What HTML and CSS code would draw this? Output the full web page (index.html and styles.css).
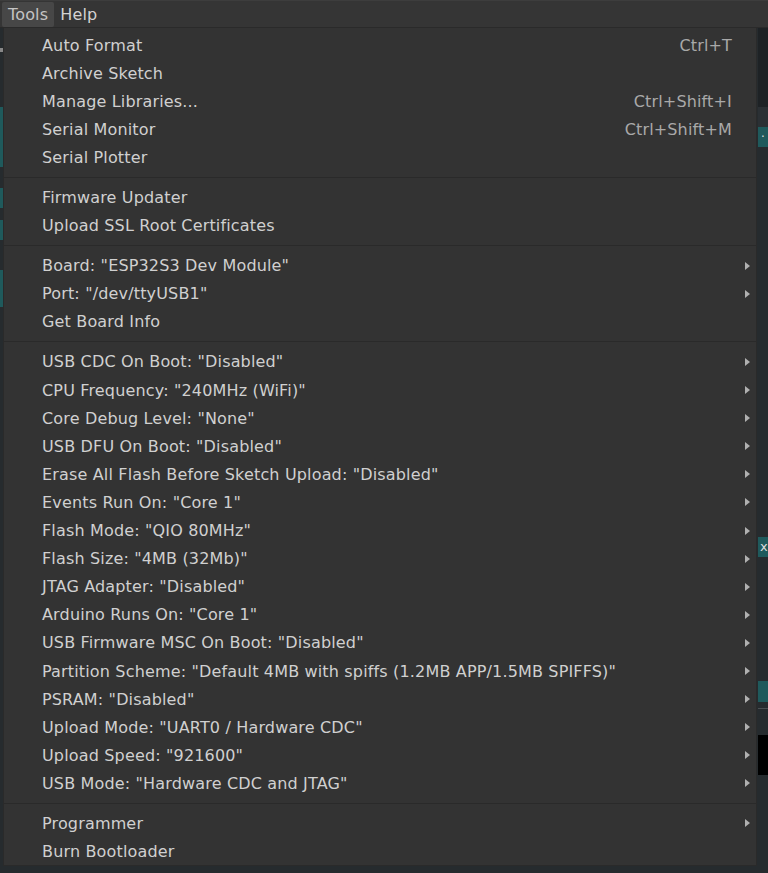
FILE: index.html
```html
<!DOCTYPE html>
<html>
<head>
<meta charset="utf-8">
<link rel="stylesheet" href="styles.css">
</head>
<body>
<div class="window">
  <div class="menubar">
    <span class="mb-item active">Tools</span>
    <span class="mb-item">Help</span>
  </div>
  <div class="editor">
    <div class="deco d1"></div>
    <div class="deco d2"></div>
    <div class="deco d3"></div>
    <div class="deco d4"></div>
    <div class="deco d5"></div>
    <div class="deco r1"></div>
    <div class="deco r2"></div>
    <div class="deco r3">·</div>
    <div class="deco r4">x</div>
    <div class="deco r5"></div>
    <div class="deco r6"></div>
    <div class="deco r7"></div>
  </div>
  <div class="menu">
    <div class="item"><span class="label">Auto Format</span><span class="sc">Ctrl+T</span><span class="arr"></span></div>
    <div class="item"><span class="label">Archive Sketch</span><span class="arr"></span></div>
    <div class="item"><span class="label">Manage Libraries...</span><span class="sc">Ctrl+Shift+I</span><span class="arr"></span></div>
    <div class="item"><span class="label">Serial Monitor</span><span class="sc">Ctrl+Shift+M</span><span class="arr"></span></div>
    <div class="item"><span class="label">Serial Plotter</span><span class="arr"></span></div>
    <div class="sep"></div>
    <div class="item"><span class="label">Firmware Updater</span><span class="arr"></span></div>
    <div class="item"><span class="label">Upload SSL Root Certificates</span><span class="arr"></span></div>
    <div class="sep"></div>
    <div class="item"><span class="label">Board: "ESP32S3 Dev Module"</span><span class="arr sub"></span></div>
    <div class="item"><span class="label">Port: "/dev/ttyUSB1"</span><span class="arr sub"></span></div>
    <div class="item"><span class="label">Get Board Info</span><span class="arr"></span></div>
    <div class="sep"></div>
    <div class="item"><span class="label">USB CDC On Boot: "Disabled"</span><span class="arr sub"></span></div>
    <div class="item"><span class="label">CPU Frequency: "240MHz (WiFi)"</span><span class="arr sub"></span></div>
    <div class="item"><span class="label">Core Debug Level: "None"</span><span class="arr sub"></span></div>
    <div class="item"><span class="label">USB DFU On Boot: "Disabled"</span><span class="arr sub"></span></div>
    <div class="item"><span class="label">Erase All Flash Before Sketch Upload: "Disabled"</span><span class="arr sub"></span></div>
    <div class="item"><span class="label">Events Run On: "Core 1"</span><span class="arr sub"></span></div>
    <div class="item"><span class="label">Flash Mode: "QIO 80MHz"</span><span class="arr sub"></span></div>
    <div class="item"><span class="label">Flash Size: "4MB (32Mb)"</span><span class="arr sub"></span></div>
    <div class="item"><span class="label">JTAG Adapter: "Disabled"</span><span class="arr sub"></span></div>
    <div class="item"><span class="label">Arduino Runs On: "Core 1"</span><span class="arr sub"></span></div>
    <div class="item"><span class="label">USB Firmware MSC On Boot: "Disabled"</span><span class="arr sub"></span></div>
    <div class="item"><span class="label">Partition Scheme: "Default 4MB with spiffs (1.2MB APP/1.5MB SPIFFS)"</span><span class="arr sub"></span></div>
    <div class="item"><span class="label">PSRAM: "Disabled"</span><span class="arr sub"></span></div>
    <div class="item"><span class="label">Upload Mode: "UART0 / Hardware CDC"</span><span class="arr sub"></span></div>
    <div class="item"><span class="label">Upload Speed: "921600"</span><span class="arr sub"></span></div>
    <div class="item"><span class="label">USB Mode: "Hardware CDC and JTAG"</span><span class="arr sub"></span></div>
    <div class="sep"></div>
    <div class="item"><span class="label">Programmer</span><span class="arr sub"></span></div>
    <div class="item"><span class="label">Burn Bootloader</span><span class="arr"></span></div>
  </div>
</div>
</body>
</html>
```
FILE: styles.css
```css
html, body {
  margin: 0;
  padding: 0;
}
body {
  width: 768px;
  height: 873px;
  overflow: hidden;
  background: #262b2e;
  font-family: "DejaVu Sans", "Liberation Sans", sans-serif;
  font-size: 16px;
  letter-spacing: 0.16px;
  color: #cfcfcf;
}
.window {
  position: relative;
  width: 768px;
  height: 873px;
  display: flex;
  flex-direction: column;
}
.menubar {
  height: 28px;
  box-sizing: border-box;
  background: #353535;
  border-top: 1px solid #3d3d3d;
  border-bottom: 1px solid #2a2a2a;
  display: flex;
  align-items: center;
  padding-left: 2px;
}
.mb-item {
  height: 25px;
  line-height: 25px;
  padding: 0 6px;
  color: #d2d2d2;
  border-radius: 2px;
}
.mb-item.active {
  background: #474747;
  color: #c4c4c4;
}
.editor {
  flex: 1;
  position: relative;
  background: #262b2e;
}
.deco {
  position: absolute;
}
.d1 { left: 0; top: 79px; width: 3px; height: 60px; background: #1f5a5c; }
.d2 { left: 0; top: 160px; width: 3px; height: 20px; background: #1f5a5c; }
.d3 { left: 0; top: 192px; width: 3px; height: 20px; background: #1f5a5c; }
.d4 { left: 0; top: 242px; width: 3px; height: 37px; background: #1f5a5c; }
.d5 { left: 0; top: 20px; width: 3px; height: 4px; background: #888; }
.r1 { right: 0; top: 0; width: 10px; height: 79px; background: #1e2225; }
.r2 { right: 0; top: 79px; width: 10px; height: 20px; background: #2b3034; }
.r3 { right: 0; top: 99px; width: 10px; height: 20px; background: #1f5a5c; color: #ddd; font-size: 12px; line-height: 20px; text-align: center; }
.r4 { right: 0; top: 509px; width: 10px; height: 20px; background: #1f5a5c; color: #ddd; font-size: 13px; line-height: 20px; text-indent: 2px; overflow: hidden; }
.r5 { right: 0; top: 653px; width: 10px; height: 21px; background: #1f5a5c; }
.r6 { right: 0; top: 680px; width: 10px; height: 1px; background: #4a4f52; }
.r7 { right: 0; top: 707px; width: 10px; height: 40px; background: #000; }

.menu {
  position: absolute;
  left: 3px;
  top: 28px;
  width: 754px;
  height: 838px;
  box-sizing: border-box;
  background: #333333;
  border: 1px solid #2a2a2a;
  border-top: none;
  padding-top: 3px;
}
.item {
  height: 28.1px;
  display: flex;
  align-items: center;
  padding-left: 38px;
  white-space: nowrap;
}
.label {
  flex: 1;
  color: #d0d0d0;
}
.sc {
  color: #a9a9a9;
}
.arr {
  width: 24px;
  height: 100%;
  display: flex;
  align-items: center;
  padding-left: 13px;
  box-sizing: border-box;
}
.arr.sub::before {
  content: "";
  width: 0;
  height: 0;
  border-left: 5px solid #b0b0b0;
  border-top: 4px solid transparent;
  border-bottom: 4px solid transparent;
}
.sep {
  height: 12px;
  display: flex;
  align-items: center;
}
.sep::before {
  content: "";
  flex: 1;
  height: 1px;
  background: #2a2a2a;
}
```
